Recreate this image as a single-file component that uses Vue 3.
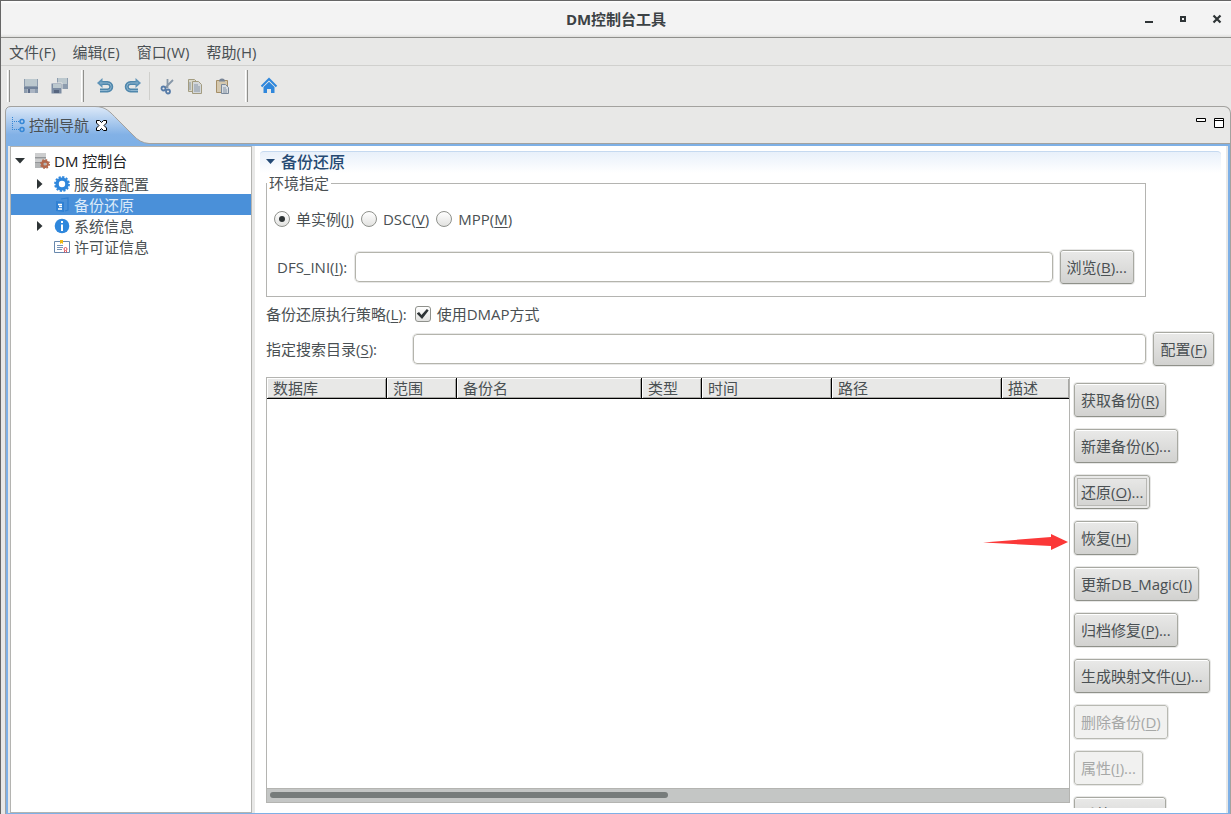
<template>
  <div class="window">
    <header class="titlebar">
      <h1 class="title">DM控制台工具</h1>
      <div class="window-controls">
        <button type="button" aria-label="最小化">
          <svg width="10" height="10" viewBox="0 0 10 10"><path d="M1 7h8v2H1z" fill="#2e3436" /></svg>
        </button>
        <button type="button" aria-label="最大化">
          <svg width="10" height="10" viewBox="0 0 10 10"><path d="M3 3h4v4H3z" fill="none" stroke="#2e3436" stroke-width="2" /></svg>
        </button>
        <button type="button" aria-label="关闭">
          <svg width="10" height="10" viewBox="0 0 10 10"><path d="M1.500 1.500l7 7M8.500 1.500l-7 7" stroke="#2e3436" stroke-width="2.200" /></svg>
        </button>
      </div>
    </header>

    <nav class="menubar">
      <button v-for="menu in menus" :key="menu" type="button" class="menu">{{ menu }}</button>
    </nav>

    <div class="toolbar">
      <i class="handle"></i>
      <button type="button" class="tool" aria-label="保存">
        <svg width="16" height="16" viewBox="0 0 16 16">
          <path d="M1 1h14v14H1z" fill="#8d9cae" />
          <path d="M2 1h12v7H2z" fill="#bcc8ce" />
          <path d="M1 9h14v2H1z" fill="#71829a" />
          <path d="M4 11h8v4H4z" fill="#aab4c2" />
          <path d="M5 11h2v4H5z" fill="#5d6c88" />
        </svg>
      </button>
      <button type="button" class="tool" aria-label="全部保存">
        <svg width="18" height="18" viewBox="0 0 18 18">
          <path d="M7 1h11v11H7z" fill="#8d9cae" />
          <path d="M8 1h9v6H8z" fill="#bcc8ce" />
          <path d="M1 6h11v11H1z" fill="#7b8ba2" stroke="#e8e8e7" />
          <path d="M3 7h8v4H3z" fill="#bcc8ce" />
          <path d="M4 13h5v3H4z" fill="#56657f" />
        </svg>
      </button>
      <i class="handle"></i>
      <button type="button" class="tool" aria-label="撤销">
        <svg width="18" height="18" viewBox="0 0 18 18">
          <path d="M4 6h7.500a3.700 3.700 0 0 1 0 7.500H4" fill="none" stroke="#4f87ac" stroke-width="4" />
          <path d="M1 6l5.500-5v10z" fill="#5f94b8" />
          <path d="M4 6h7.500a3.700 3.700 0 0 1 0 7.500H4" fill="none" stroke="#8fb6d0" stroke-width="1" />
        </svg>
      </button>
      <button type="button" class="tool" aria-label="重做">
        <svg width="18" height="18" viewBox="0 0 18 18">
          <path d="M14 6H6.500a3.700 3.700 0 0 0 0 7.500H14" fill="none" stroke="#4f87ac" stroke-width="4" />
          <path d="M17 6l-5.500-5v10z" fill="#5f94b8" />
          <path d="M14 6H6.500a3.700 3.700 0 0 0 0 7.500H14" fill="none" stroke="#8fb6d0" stroke-width="1" />
        </svg>
      </button>
      <i class="divider"></i>
      <button type="button" class="tool" aria-label="剪切">
        <svg width="16" height="18" viewBox="0 0 16 18">
          <path d="M8.500 2v9M14 3L6 11" fill="none" stroke="#8797a8" stroke-width="1.800" />
          <circle cx="4.500" cy="11.500" r="2" fill="none" stroke="#567ba8" stroke-width="1.800" />
          <circle cx="9" cy="14.500" r="2" fill="none" stroke="#567ba8" stroke-width="1.800" />
        </svg>
      </button>
      <button type="button" class="tool" aria-label="复制">
        <svg width="18" height="18" viewBox="0 0 18 18">
          <path d="M2.500 2.500h6l3 3v9h-9z" fill="#d9d8ca" stroke="#a39c80" />
          <path d="M6.500 4.500h6l3 3v9h-9z" fill="#d3d7da" stroke="#a39c80" />
          <path d="M8 8h4M8 10h6M8 12h6M8 14h6M4 5v8" stroke="#8795a6" />
        </svg>
      </button>
      <button type="button" class="tool" aria-label="粘贴">
        <svg width="18" height="18" viewBox="0 0 18 18">
          <path d="M2.500 3.500h11v12h-11z" fill="#d5c8ae" stroke="#a58e67" />
          <path d="M5 4.500a3 3 0 0 1 6 0z" fill="#788596" />
          <path d="M7.500 7.500h4l3 3v6h-7z" fill="#d7dce0" stroke="#7a899b" />
          <path d="M9 11h3M9 13h4M9 15h4" stroke="#8795a6" />
        </svg>
      </button>
      <i class="handle"></i>
      <button type="button" class="tool" aria-label="主页">
        <svg width="18" height="18" viewBox="0 0 18 18">
          <path d="M1.500 9.500L9 2l7.500 7.500" fill="none" stroke="#2f87dc" stroke-width="2" />
          <path d="M3.500 10L9 4.700l5.500 5.300V16H11v-4H7v4H3.500z" fill="#2f87dc" />
        </svg>
      </button>
    </div>

    <div class="folder">
      <div class="tab-strip">
        <svg class="tab-shape" width="150" height="38" viewBox="0 0 150 38">
          <defs>
            <linearGradient id="tabFill" x1="0" y1="0" x2="0" y2="1">
              <stop offset="0" stop-color="#dde9f8" />
              <stop offset="0.750" stop-color="#82b1e6" />
              <stop offset="1" stop-color="#7eb0e6" />
            </linearGradient>
          </defs>
          <path d="M0 38V6Q0 .5 6 .5H90C101 .5 105 6 112 13L128 29Q135 37 144 37.500V38z" fill="url(#tabFill)" />
          <path d="M.5 38V6Q.5 .5 6 .5H90C101 .5 105 6 112 13L128 29Q135 37 144 37.500H150" fill="none" stroke="#a3a29f" />
        </svg>
        <div class="tab">
          <svg width="14" height="16" viewBox="0 0 14 16">
            <path d="M1.500 0v14M1 4.500h8M1 12.500h8" fill="none" stroke="#3587d6" stroke-dasharray="1 1" />
            <circle cx="11" cy="4.500" r="2" fill="none" stroke="#3587d6" stroke-width="1.500" />
            <circle cx="11" cy="12.500" r="2" fill="none" stroke="#3587d6" stroke-width="1.500" />
          </svg>
          <span>控制导航</span>
          <button type="button" class="tab-close" aria-label="关闭标签">
            <svg width="11" height="11" viewBox="0 0 11 11">
              <path d="M.5 .5h3l2 2 2-2h3v2.500L8 5.500l2.500 2.500v2.500h-3l-2-2-2 2h-3V8L3 5.500.5 3z" fill="#fff" stroke="#000" />
            </svg>
          </button>
        </div>
        <div class="view-controls">
          <button type="button" aria-label="最小化视图">
            <svg width="10" height="10" viewBox="0 0 10 10"><path d="M.5 .5h9v3h-9z" fill="#fff" stroke="#000" /></svg>
          </button>
          <button type="button" aria-label="最大化视图">
            <svg width="10" height="10" viewBox="0 0 10 10"><path d="M.5 .5h9v9h-9zM0 2.500h10" fill="#fff" stroke="#000" /></svg>
          </button>
        </div>
      </div>

      <div class="view">
        <ul class="tree">
          <li
            v-for="node in nodes"
            :key="node.label"
            class="node"
            :class="{ child: node.child, selected: node.selected }"
          >
            <span class="twisty">
              <svg v-if="node.arrow === 'down'" width="10" height="6" viewBox="0 0 10 6"><path d="M0 0h10L5 5.500z" fill="#2e3436" /></svg>
              <svg v-if="node.arrow === 'right'" width="6" height="10" viewBox="0 0 6 10"><path d="M0 0v10l5.500-5z" fill="#2e3436" /></svg>
            </span>
            <svg v-if="node.icon === 'server'" width="16" height="16" viewBox="0 0 16 16">
              <path d="M1 0h11v15H1z" fill="#b4b6b7" />
              <path d="M1 0h11v4H1zM1 6h11v3H1z" fill="#cdcecf" />
              <path d="M1 4h11v1H1zM1 9h11v1H1z" fill="#94979a" />
              <circle cx="11" cy="11" r="2.800" fill="none" stroke="#b3674a" stroke-width="2.400" />
              <circle cx="11" cy="11" r="4.300" fill="none" stroke="#b3674a" stroke-width="1.400" stroke-dasharray="1.700 1.680" />
            </svg>
            <svg v-if="node.icon === 'gear'" width="16" height="16" viewBox="0 0 16 16">
              <circle cx="8" cy="8" r="4.900" fill="none" stroke="#2f87dc" stroke-width="3.400" />
              <circle cx="8" cy="8" r="7" fill="none" stroke="#2f87dc" stroke-width="1.800" stroke-dasharray="2.200 1.465" />
            </svg>
            <svg v-if="node.icon === 'backup'" width="16" height="16" viewBox="0 0 16 16">
              <path d="M7 2l7-1v12l-3 1" fill="none" stroke="#2f7fd0" stroke-width="1.200" />
              <path d="M2 4l8 1v10l-8-1z" fill="#2f80d3" />
              <path d="M4 7.500h4M5 9.500h3M4 12h4" stroke="#fff" stroke-width="1.400" />
            </svg>
            <svg v-if="node.icon === 'info'" width="16" height="16" viewBox="0 0 16 16">
              <circle cx="8" cy="8" r="7.300" fill="#2f87dc" />
              <path d="M7 3h2v2H7zM7 6.500h2V13H7z" fill="#fff" />
            </svg>
            <svg v-if="node.icon === 'license'" width="16" height="16" viewBox="0 0 16 16">
              <path d="M.5 2.500h15v11H.5z" fill="#fff" stroke="#6888ad" />
              <path d="M6 1h3v4L7.500 4 6 5z" fill="#f0b913" />
              <path d="M3 6.500h6M3 8.500h6M3 10.500h5" stroke="#7592b5" />
              <circle cx="11.500" cy="10" r="1.500" fill="none" stroke="#e0545c" />
              <path d="M10.500 11.500v2M12.500 11.500v2" stroke="#e0545c" />
            </svg>
            <span>{{ node.label }}</span>
          </li>
        </ul>

        <main class="editor">
          <h2 class="section-title">
            <svg width="9" height="5" viewBox="0 0 9 5"><path d="M0 0h9L4.500 5z" fill="#244a75" /></svg>
            备份还原
          </h2>

          <div class="form">
            <fieldset class="env">
              <legend>环境指定</legend>
              <div class="radios">
                <label v-for="mode in modes" :key="mode.key">
                  <input v-model="currentMode" type="radio" name="mode" :value="mode.key" />
                  <span>{{ mode.label }}(<u>{{ mode.key }}</u>)</span>
                </label>
              </div>
              <div class="ini">
                <label for="ini">DFS_INI(<u>I</u>):</label>
                <input id="ini" v-model="iniPath" type="text" class="field" />
                <button type="button" class="btn">浏览(<u>B</u>)...</button>
              </div>
            </fieldset>

            <div class="strategy">
              <span>备份还原执行策略(<u>L</u>):</span>
              <label>
                <input v-model="useDmap" type="checkbox" />
                <span>使用DMAP方式</span>
              </label>
            </div>

            <div class="search">
              <label for="dir">指定搜索目录(<u>S</u>):</label>
              <input id="dir" v-model="searchDir" type="text" class="field" />
              <button type="button" class="btn">配置(<u>F</u>)</button>
            </div>

            <div class="result">
              <div class="table-box">
                <div class="table-body">
                  <table>
                    <thead>
                      <tr>
                        <th v-for="col in columns" :key="col.label" :style="{ width: col.width }">{{ col.label }}</th>
                      </tr>
                    </thead>
                  </table>
                </div>
                <div class="scrollbar"><i class="thumb"></i></div>
                <svg class="pointer" width="86" height="18" viewBox="0 0 86 18">
                  <path d="M0 9.500L68 4V1l17 8-17 8v-4z" fill="#fb3838" />
                </svg>
              </div>
              <div class="actions">
                <button
                  v-for="action in actions"
                  :key="action.label"
                  type="button"
                  class="btn"
                  :class="{ focused: action.focused }"
                  :disabled="action.disabled"
                >{{ action.label }}(<u>{{ action.key }}</u>){{ action.more }}</button>
              </div>
            </div>
          </div>
        </main>
      </div>
    </div>
  </div>
</template>

<script setup>
import { ref } from 'vue'

const menus = ['文件(F)', '编辑(E)', '窗口(W)', '帮助(H)']

const nodes = [
  { label: 'DM 控制台', icon: 'server', arrow: 'down' },
  { label: '服务器配置', icon: 'gear', arrow: 'right', child: true },
  { label: '备份还原', icon: 'backup', child: true, selected: true },
  { label: '系统信息', icon: 'info', arrow: 'right', child: true },
  { label: '许可证信息', icon: 'license', child: true }
]

const modes = [
  { label: '单实例', key: 'J' },
  { label: 'DSC', key: 'V' },
  { label: 'MPP', key: 'M' }
]

const columns = [
  { label: '数据库', width: '120px' },
  { label: '范围', width: '70px' },
  { label: '备份名', width: '185px' },
  { label: '类型', width: '60px' },
  { label: '时间', width: '130px' },
  { label: '路径', width: '170px' },
  { label: '描述', width: 'auto' }
]

const actions = [
  { label: '获取备份', key: 'R' },
  { label: '新建备份', key: 'K', more: '...' },
  { label: '还原', key: 'O', more: '...', focused: true },
  { label: '恢复', key: 'H' },
  { label: '更新DB_Magic', key: 'I' },
  { label: '归档修复', key: 'P', more: '...' },
  { label: '生成映射文件', key: 'U', more: '...' },
  { label: '删除备份', key: 'D', disabled: true },
  { label: '属性', key: 'I', more: '...', disabled: true },
  { label: '系统配置', key: 'C' }
]

const currentMode = ref('J')
const iniPath = ref('')
const useDmap = ref(true)
const searchDir = ref('')
</script>

<style>
body {
  margin: 0;
}
</style>

<style scoped>
* {
  box-sizing: border-box;
}

.window {
  display: flex;
  flex-direction: column;
  height: 100vh;
  overflow: hidden;
  border-top: 1px solid #666;
  border-left: 1px solid #666;
  background: #e8e8e7;
  color: #4a5053;
  font: 15px/20px "Open Sans", "Noto Sans CJK SC", sans-serif;
}

button,
input {
  font: inherit;
  color: inherit;
  margin: 0;
}

button {
  padding: 0;
  border: 0;
  background: none;
  white-space: nowrap;
}

svg {
  display: block;
  flex: none;
}

u {
  text-underline-offset: 2px;
}

.titlebar {
  display: grid;
  grid-template-columns: 1fr auto 1fr;
  align-items: center;
  flex: none;
  height: 37px;
  border-bottom: 1px solid #8e8e8b;
  background: linear-gradient(#fff, #f3f3f3 3px, #f3f3f3 33px, #dededc);
}

.title {
  grid-column: 2;
  margin: 0;
  color: #3c4245;
  font-size: 15px;
  font-weight: 700;
}

.window-controls {
  display: flex;
  justify-content: flex-end;
  gap: 24px;
  padding-right: 9px;
}

.menubar {
  display: flex;
  flex: none;
  gap: 17px;
  height: 28px;
  padding-left: 8px;
  border-bottom: 1px solid #d0d0ce;
}

.toolbar {
  display: flex;
  align-items: center;
  flex: none;
  height: 40px;
  padding-left: 6px;
}

.tool {
  display: grid;
  place-items: center;
  width: 28px;
  height: 28px;
}

.handle {
  width: 3px;
  height: 32px;
  margin: 0 7px 0 0;
  border-left: 1px solid #fff;
  border-right: 1px solid #8f8f8c;
}

.tool + .handle {
  margin-left: 8px;
}

.divider {
  width: 1px;
  height: 28px;
  margin: 0 3px 0 2px;
  background: #cfcfcc;
}

.folder {
  display: flex;
  flex-direction: column;
  flex: 1;
  min-height: 0;
  margin-left: 4px;
  border: 1px solid #a3a29f;
  border-bottom: 0;
  border-radius: 7px 7px 0 0;
}

.tab-strip {
  position: relative;
  display: flex;
  align-items: center;
  justify-content: space-between;
  flex: none;
  height: 37px;
  border-bottom: 1px solid #a3a29f;
}

.tab-shape {
  position: absolute;
  left: -1px;
  top: -1px;
}

.tab {
  position: relative;
  display: flex;
  align-items: center;
  gap: 4px;
  padding-left: 5px;
}

.tab-close {
  margin-left: 3px;
}

.view-controls {
  display: flex;
  gap: 8px;
  padding: 0 6px 5px 0;
}

.view {
  display: grid;
  grid-template-columns: 242px 1fr;
  gap: 3px;
  flex: 1;
  min-height: 0;
  border: 2px solid #7eb0e6;
  border-bottom-width: 1px;
  padding: 0 2px;
}

.tree {
  margin: 0;
  padding: 1px 0;
  border: 1px solid #b4b4b1;
  background: #fff;
  list-style: none;
}

.node {
  display: flex;
  align-items: center;
  gap: 4px;
  height: 21px;
  padding-left: 3px;
}

.node:first-child {
  height: 25px;
  color: #1d2123;
}

.child {
  padding-left: 23px;
}

.selected {
  background: #4a90d9;
  color: #dcebf9;
}

.twisty {
  display: grid;
  place-items: center;
  width: 12px;
  margin-right: 4px;
}

.editor {
  display: flex;
  flex-direction: column;
  min-width: 0;
  min-height: 0;
  padding: 5px 5px 5px;
  background: #fff;
}

.section-title {
  display: flex;
  align-items: center;
  gap: 6px;
  flex: none;
  height: 22px;
  margin: 0;
  padding: 0 0 2px 6px;
  border-top: 1px solid #c5d9f0;
  border-radius: 4px 4px 0 0;
  background: linear-gradient(#e8f0fa, #fff);
  color: #264a73;
  font-size: 16px;
  font-weight: 500;
}

.form {
  display: flex;
  flex-direction: column;
  flex: 1;
  min-height: 0;
  padding: 0 6px;
}

.env {
  min-width: 0;
  margin: 0 69px 0 0;
  padding: 16px 10px 11px 7px;
  border: 1px solid #b4b4b1;
}

.env legend {
  height: 20px;
  margin-left: -7px;
  padding: 0 2px;
}

.radios {
  display: flex;
  gap: 7px;
}

.radios label,
.strategy label {
  display: flex;
  align-items: center;
  gap: 6px;
}

input[type="radio"],
input[type="checkbox"] {
  display: grid;
  place-items: center;
  appearance: none;
  width: 16px;
  height: 16px;
  border: 1px solid #8f918c;
  border-radius: 8px;
  background: linear-gradient(#fff, #e2e2e0);
}

input[type="radio"]:checked::before {
  content: "";
  width: 6px;
  height: 6px;
  border-radius: 3px;
  background: #2e3436;
}

input[type="checkbox"] {
  border-radius: 3px;
}

input[type="checkbox"]:checked::before {
  content: "";
  width: 12px;
  height: 10px;
  background: #2e3436;
  clip-path: polygon(0 45%, 20% 30%, 40% 60%, 85% 0, 100% 15%, 45% 100%);
}

.ini,
.search {
  display: flex;
  align-items: center;
  gap: 6px;
}

.ini {
  margin-top: 20px;
}

.ini label {
  width: 75px;
  padding-left: 3px;
  white-space: nowrap;
}

.field {
  flex: 1;
  min-width: 0;
  height: 30px;
  padding: 0 6px;
  border: 1px solid #b4b4ac;
  border-radius: 4px;
  outline: 1px solid #e8e8e7;
  background: #fff;
}

.btn {
  height: 34px;
  margin: 1px;
  padding: 0 6px;
  border: 1px solid #a8a9a2;
  border-bottom-color: #8f918a;
  border-radius: 3px;
  outline: 1px solid #e8e8e7;
  background: linear-gradient(#e9e9e8, #d2d2d0);
  box-shadow: inset 0 1px #fff;
}

.focused {
  box-shadow: inset 0 0 0 2px #e9e9e8, inset 0 0 0 3px #b8b8b4;
}

.btn:disabled {
  border-color: #b8b9b2;
  background: #f1f1f0;
  box-shadow: none;
  color: #a6a8a7;
}

.strategy {
  display: flex;
  gap: 8px;
  padding: 7px 0;
}

.search label {
  width: 141px;
}

.result {
  display: flex;
  gap: 3px;
  flex: 1;
  min-height: 0;
  margin-top: 10px;
}

.table-box {
  position: relative;
  display: flex;
  flex-direction: column;
  flex: 1;
  min-width: 0;
  margin-bottom: 5px;
  border: 1px solid #b4b4b1;
}

.table-body {
  flex: 1;
  overflow: hidden;
}

table {
  width: 100%;
  table-layout: fixed;
  border-collapse: separate;
  border-spacing: 0;
}

th {
  height: 21px;
  padding: 0 6px;
  border-right: 1px solid #000;
  border-bottom: 1px solid #000;
  background: #e8e8e7;
  box-shadow: inset 1px 1px #fff, inset -1px -1px #a8a8a5;
  font-weight: 400;
  line-height: 20px;
  text-align: left;
}

th:last-child {
  border-right: 0;
}

.scrollbar {
  height: 14px;
  padding: 3px;
  border-top: 1px solid #b4b4b1;
  background: #c4c6c5;
}

.thumb {
  display: block;
  width: 50%;
  height: 6px;
  border-radius: 3px;
  background: #777c7b;
}

.pointer {
  position: absolute;
  right: 0;
  top: 155px;
}

.actions {
  display: flex;
  flex-direction: column;
  align-items: flex-start;
  gap: 10px;
  width: 143px;
  padding: 5px 1px 0;
  margin-left: -1px;
  overflow: hidden;
}

.actions .btn {
  flex: none;
}
</style>
